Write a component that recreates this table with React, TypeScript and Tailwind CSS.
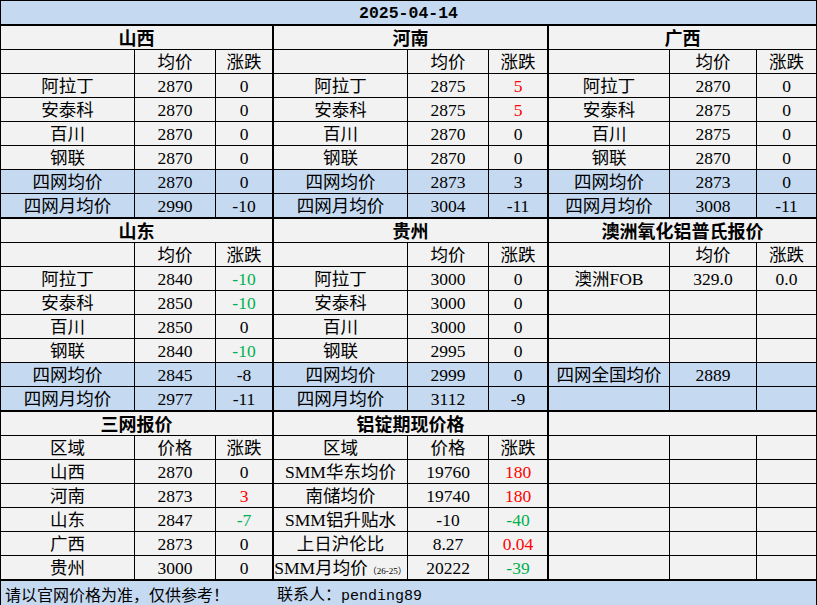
type Cell = string | { t: string; c?: "r" | "g"; small?: string };
type Row = { cells: Cell[]; blue?: boolean };
type Section = { title: string; rows: Row[]; widths: [string, string] };

const L: [string, string] = ["w-[134px]", "w-[81px]"];
const R: [string, string] = ["w-[121px]", "w-[87px]"];

const hdr: Row = { cells: ["", "均价", "涨跌"] };
const hdr3: Row = { cells: ["区域", "价格", "涨跌"] };
const red = (t: string): Cell => ({ t, c: "r" });
const green = (t: string): Cell => ({ t, c: "g" });
const empty: Row = { cells: ["", "", ""] };

function net(rows: Cell[][], avg: Cell[], month: Cell[]): Row[] {
  return [
    hdr,
    ...rows.map((r, i) => ({ cells: [["阿拉丁", "安泰科", "百川", "钢联"][i], ...r] })),
    { cells: ["四网均价", ...avg], blue: true },
    { cells: ["四网月均价", ...month], blue: true },
  ];
}

const bands: Section[][] = [
  [
    {
      title: "山西",
      widths: L,
      rows: net([["2870", "0"], ["2870", "0"], ["2870", "0"], ["2870", "0"]], ["2870", "0"], ["2990", "-10"]),
    },
    {
      title: "河南",
      widths: L,
      rows: net([["2875", red("5")], ["2875", red("5")], ["2870", "0"], ["2870", "0"]], ["2873", "3"], ["3004", "-11"]),
    },
    {
      title: "广西",
      widths: R,
      rows: net([["2870", "0"], ["2875", "0"], ["2875", "0"], ["2870", "0"]], ["2873", "0"], ["3008", "-11"]),
    },
  ],
  [
    {
      title: "山东",
      widths: L,
      rows: net(
        [["2840", green("-10")], ["2850", green("-10")], ["2850", "0"], ["2840", green("-10")]],
        ["2845", "-8"],
        ["2977", "-11"]
      ),
    },
    {
      title: "贵州",
      widths: L,
      rows: net([["3000", "0"], ["3000", "0"], ["3000", "0"], ["2995", "0"]], ["2999", "0"], ["3112", "-9"]),
    },
    {
      title: "澳洲氧化铝普氏报价",
      widths: R,
      rows: [
        hdr,
        { cells: ["澳洲FOB", "329.0", "0.0"] },
        empty,
        empty,
        empty,
        { cells: ["四网全国均价", "2889", ""], blue: true },
        { cells: ["", "", ""], blue: true },
      ],
    },
  ],
  [
    {
      title: "三网报价",
      widths: L,
      rows: [
        hdr3,
        { cells: ["山西", "2870", "0"] },
        { cells: ["河南", "2873", red("3")] },
        { cells: ["山东", "2847", green("-7")] },
        { cells: ["广西", "2873", "0"] },
        { cells: ["贵州", "3000", "0"] },
      ],
    },
    {
      title: "铝锭期现价格",
      widths: L,
      rows: [
        hdr3,
        { cells: ["SMM华东均价", "19760", red("180")] },
        { cells: ["南储均价", "19740", red("180")] },
        { cells: ["SMM铝升贴水", "-10", green("-40")] },
        { cells: ["上日沪伦比", "8.27", red("0.04")] },
        { cells: [{ t: "SMM月均价", small: "（26-25）" }, "20222", green("-39")] },
      ],
    },
    {
      title: "",
      widths: R,
      rows: [empty, empty, empty, empty, empty, empty],
    },
  ],
];

function CellText({ cell }: { cell: Cell }) {
  if (typeof cell === "string") return <>{cell}</>;
  const color = cell.c === "r" ? "text-[#ff0000]" : cell.c === "g" ? "text-[#00b050]" : "";
  return (
    <span className={color}>
      {cell.t}
      {cell.small && <span className="text-[9px]">{cell.small}</span>}
    </span>
  );
}

function Block({ s, width, last }: { s: Section; width: string; last: boolean }) {
  const total = s.rows.length + 1;
  return (
    <div className={`${width} flex flex-col ${last ? "" : "border-r-2 border-black"}`}>
      <div className="h-[24px] pt-[2px] border-b border-black flex items-center justify-center font-bold text-[18px] bg-[#f2f2f2]">
        {s.title}
      </div>
      {s.rows.map((r, i) => {
        const isLast = i + 2 === total;
        return (
          <div
            key={i}
            className={`flex ${isLast ? "h-[23px]" : "h-[24px] border-b border-black"} ${
              r.blue ? "bg-[#c5d9f1]" : "bg-[#f2f2f2]"
            }`}
          >
            <div className={`${s.widths[0]} pt-[2px] border-r border-black flex items-center justify-center whitespace-nowrap`}>
              <CellText cell={r.cells[0]} />
            </div>
            <div className={`${s.widths[1]} pt-[2px] border-r border-black flex items-center justify-center`}>
              <CellText cell={r.cells[1]} />
            </div>
            <div className="flex-1 pt-[2px] flex items-center justify-center">
              <CellText cell={r.cells[2]} />
            </div>
          </div>
        );
      })}
    </div>
  );
}

export default function App() {
  return (
    <div className="w-[817px] h-[605px] overflow-hidden bg-white text-black text-[17.5px] leading-none font-['Liberation_Serif','Noto_Sans_CJK_SC',serif]">
      <div className="border-l border-t border-r border-black">
        <div className="h-[25px] pt-[3px] border-b-2 border-black bg-[#c5d9f1] flex items-center justify-center font-bold text-[16.5px] font-['Liberation_Mono',monospace]">
          2025-04-14
        </div>
        {bands.map((band, bi) => (
          <div key={bi} className="flex border-b-2 border-black">
            <Block s={band[0]} width="w-[273px]" last={false} />
            <Block s={band[1]} width="w-[275px]" last={false} />
            <Block s={band[2]} width="flex-1" last />
          </div>
        ))}
        <div className="h-[24px] pt-[2px] bg-[#c5d9f1] flex items-center text-[16px]">
          <span className="w-[276px] pl-[4px] font-['Noto_Sans_CJK_SC',sans-serif]">请以官网价格为准，仅供参考！</span>
          <span className="font-['Noto_Sans_CJK_SC',sans-serif]">
            联系人：<span className="font-['Liberation_Mono',monospace] text-[15px]">pending89</span>
          </span>
        </div>
      </div>
    </div>
  );
}
